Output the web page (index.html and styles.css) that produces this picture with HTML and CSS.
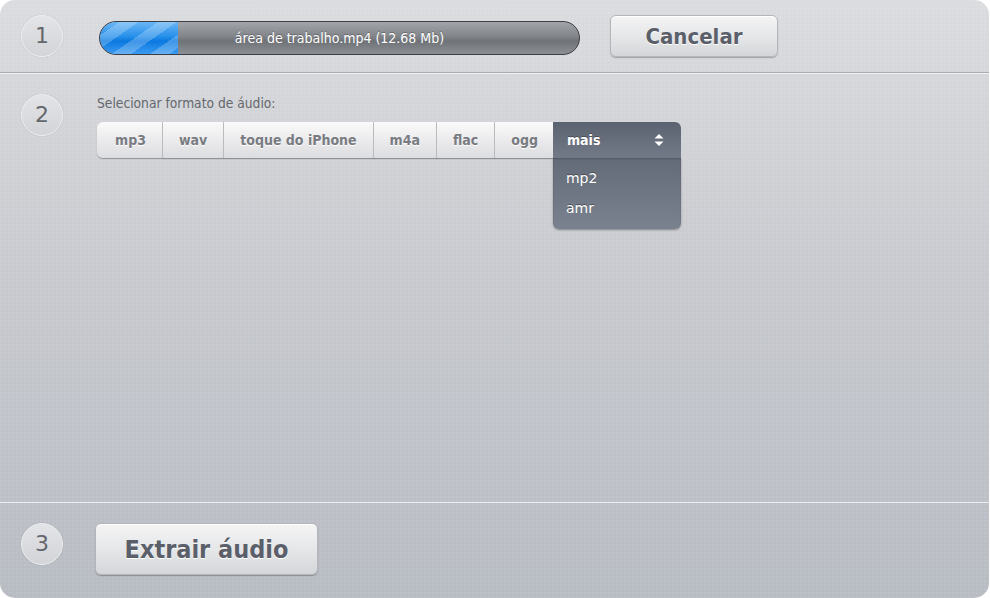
FILE: index.html
```html
<!DOCTYPE html>
<html lang="pt">

<head>
    <meta charset="UTF-8">
    <meta name="viewport" content="width=device-width, initial-scale=1.0">
    <title>Extrair áudio</title>
    <link rel="stylesheet" href="styles.css">
</head>

<body>
    <div class="panel">
        <div class="step step1">
            <div class="num">1</div>
            <div class="progress">
                <div class="progress-fill" style="width: 78px"></div>
                <span class="progress-text">área de trabalho.mp4 (12.68 Mb)</span>
            </div>
            <button class="btn btn-cancel">Cancelar</button>
        </div>

        <div class="step step2">
            <div class="num">2</div>
            <div class="format">
                <div class="format-label">Selecionar formato de áudio:</div>
                <div class="tabs">
                    <span class="tab">mp3</span>
                    <span class="tab">wav</span>
                    <span class="tab">toque do iPhone</span>
                    <span class="tab">m4a</span>
                    <span class="tab">flac</span>
                    <span class="tab">ogg</span>
                    <div class="more">
                        <div class="more-head">
                            <span>mais</span>
                            <svg width="10" height="14" viewBox="0 0 10 14">
                                <path d="M5 1 L9.5 5.5 L0.5 5.5 Z" fill="#fff" />
                                <path d="M0.5 8.5 L9.5 8.5 L5 13 Z" fill="#fff" />
                            </svg>
                        </div>
                        <div class="more-menu">
                            <div class="more-item">mp2</div>
                            <div class="more-item">amr</div>
                        </div>
                    </div>
                </div>
            </div>
        </div>

        <div class="step step3">
            <div class="num">3</div>
            <button class="btn btn-extract">Extrair áudio</button>
        </div>
    </div>
</body>

</html>
```

FILE: styles.css
```css
html,
body {
    margin: 0;
    background: #fff;
}

body {
    font-family: "DejaVu Sans Condensed", "DejaVu Sans", sans-serif;
}

.panel {
    width: 989px;
    height: 598px;
    border-radius: 15px;
    overflow: hidden;
    display: flex;
    flex-direction: column;
    background:
        radial-gradient(circle at 1px 1px, rgba(255, 255, 255, 0.07) 1px, transparent 1.5px) 0 0 / 4px 4px,
        linear-gradient(#dbdcdf, #c8cacf 45%, #b8bcc3);
}

.step {
    display: flex;
    align-items: flex-start;
    padding-left: 21px;
}

.num {
    width: 40px;
    height: 40px;
    flex: none;
    border-radius: 50%;
    border: 1px solid #eceef0;
    background: linear-gradient(#e3e4e7, #d2d4d8);
    box-shadow: 0 0 1px rgba(0, 0, 0, 0.25);
    color: #64676d;
    font-family: "DejaVu Sans", sans-serif;
    font-size: 22px;
    line-height: 40px;
    text-align: center;
}

/* passo 1 */
.step1 {
    height: 72px;
    border-bottom: 1px solid #a9acb1;
    align-items: center;
}

.step1 .num {
    margin-top: -1px;
}

.progress {
    position: relative;
    width: 479px;
    height: 32px;
    margin-left: 36px;
    margin-top: 4px;
    border: 1px solid #3b3e44;
    border-radius: 17px;
    overflow: hidden;
    background: linear-gradient(#a2a5aa, #818489 45%, #6f7277 60%, #8c8f94);
}

.progress-fill {
    position: absolute;
    left: 0;
    top: 0;
    bottom: 0;
    background:
        repeating-linear-gradient(145deg, transparent 0 11px, rgba(255, 255, 255, 0.22) 11px 22px),
        linear-gradient(#6ab6f5, #2790ea 45%, #0a78e0 60%, #3b9bf0);
}

.progress-text {
    position: relative;
    display: block;
    text-align: center;
    line-height: 32px;
    color: #fff;
    font-size: 14px;
    text-shadow: 0 -1px 0 rgba(0, 0, 0, 0.25);
}

.btn {
    border: 1px solid #b4b6ba;
    border-radius: 6px;
    background: linear-gradient(#f4f4f5, #e6e7e9 50%, #d5d6d9);
    box-shadow: 0 1px 1px rgba(0, 0, 0, 0.25), inset 0 1px 0 #fff;
    color: #5a5f6a;
    font-family: "DejaVu Sans Condensed", "DejaVu Sans", sans-serif;
    font-weight: bold;
    text-shadow: 0 1px 0 #fff;
    padding: 0;
}

.btn-cancel {
    width: 168px;
    height: 42px;
    margin-left: 30px;
    font-size: 22px;
}

/* passo 2 */
.step2 {
    height: 408px;
    padding-top: 20px;
    border-top: 1px solid #eff0f1;
    border-bottom: 1px solid #eceef0;
}

.format {
    margin-left: 34px;
    padding-top: 1px;
}

.format-label {
    color: #65686e;
    font-family: "DejaVu Sans Condensed", "DejaVu Sans", sans-serif;
    font-size: 13.7px;
    line-height: 16px;
}

.tabs {
    display: flex;
    margin-top: 11px;
    height: 36px;
}

.tab {
    padding: 0 16px;
    line-height: 36px;
    font-size: 14px;
    font-weight: bold;
    color: #787b81;
    text-shadow: 0 1px 0 #fff;
    background: linear-gradient(#fafafa, #ebebed 50%, #dcdde0);
    border-right: 1px solid #c4c6ca;
    box-shadow: 0 1px 1px rgba(0, 0, 0, 0.3);
}

.tab:first-child {
    border-radius: 6px 0 0 6px;
    padding-left: 18px;
}

.tab:nth-child(6) {
    border-right: none;
    padding-right: 15px;
}

.more {
    position: relative;
    width: 128px;
}

.more-head {
    height: 36px;
    display: flex;
    align-items: center;
    justify-content: space-between;
    padding: 0 17px 0 14px;
    color: #fff;
    font-size: 14px;
    font-weight: bold;
    border-radius: 0 6px 0 0;
    background: linear-gradient(#5c6370, #737a87);
    text-shadow: 0 -1px 0 rgba(0, 0, 0, 0.3);
}

.more-menu {
    position: absolute;
    left: 0;
    right: 0;
    top: 36px;
    height: 71px;
    padding-top: 5px;
    box-sizing: border-box;
    border-radius: 0 0 6px 6px;
    background: linear-gradient(#646b78, #7a828f);
    box-shadow: 0 1px 2px rgba(0, 0, 0, 0.35), inset 0 1px 2px rgba(0, 0, 0, 0.2);
}

.more-item {
    padding-left: 13px;
    line-height: 30px;
    color: #fff;
    font-family: "DejaVu Sans", sans-serif;
    font-size: 14px;
    text-shadow: 0 -1px 0 rgba(0, 0, 0, 0.35);
}

/* passo 3 */
.step3 {
    flex: 1;
    padding-top: 20px;
}

.btn-extract {
    width: 223px;
    height: 52px;
    margin-left: 32px;
    font-size: 25px;
}
```
